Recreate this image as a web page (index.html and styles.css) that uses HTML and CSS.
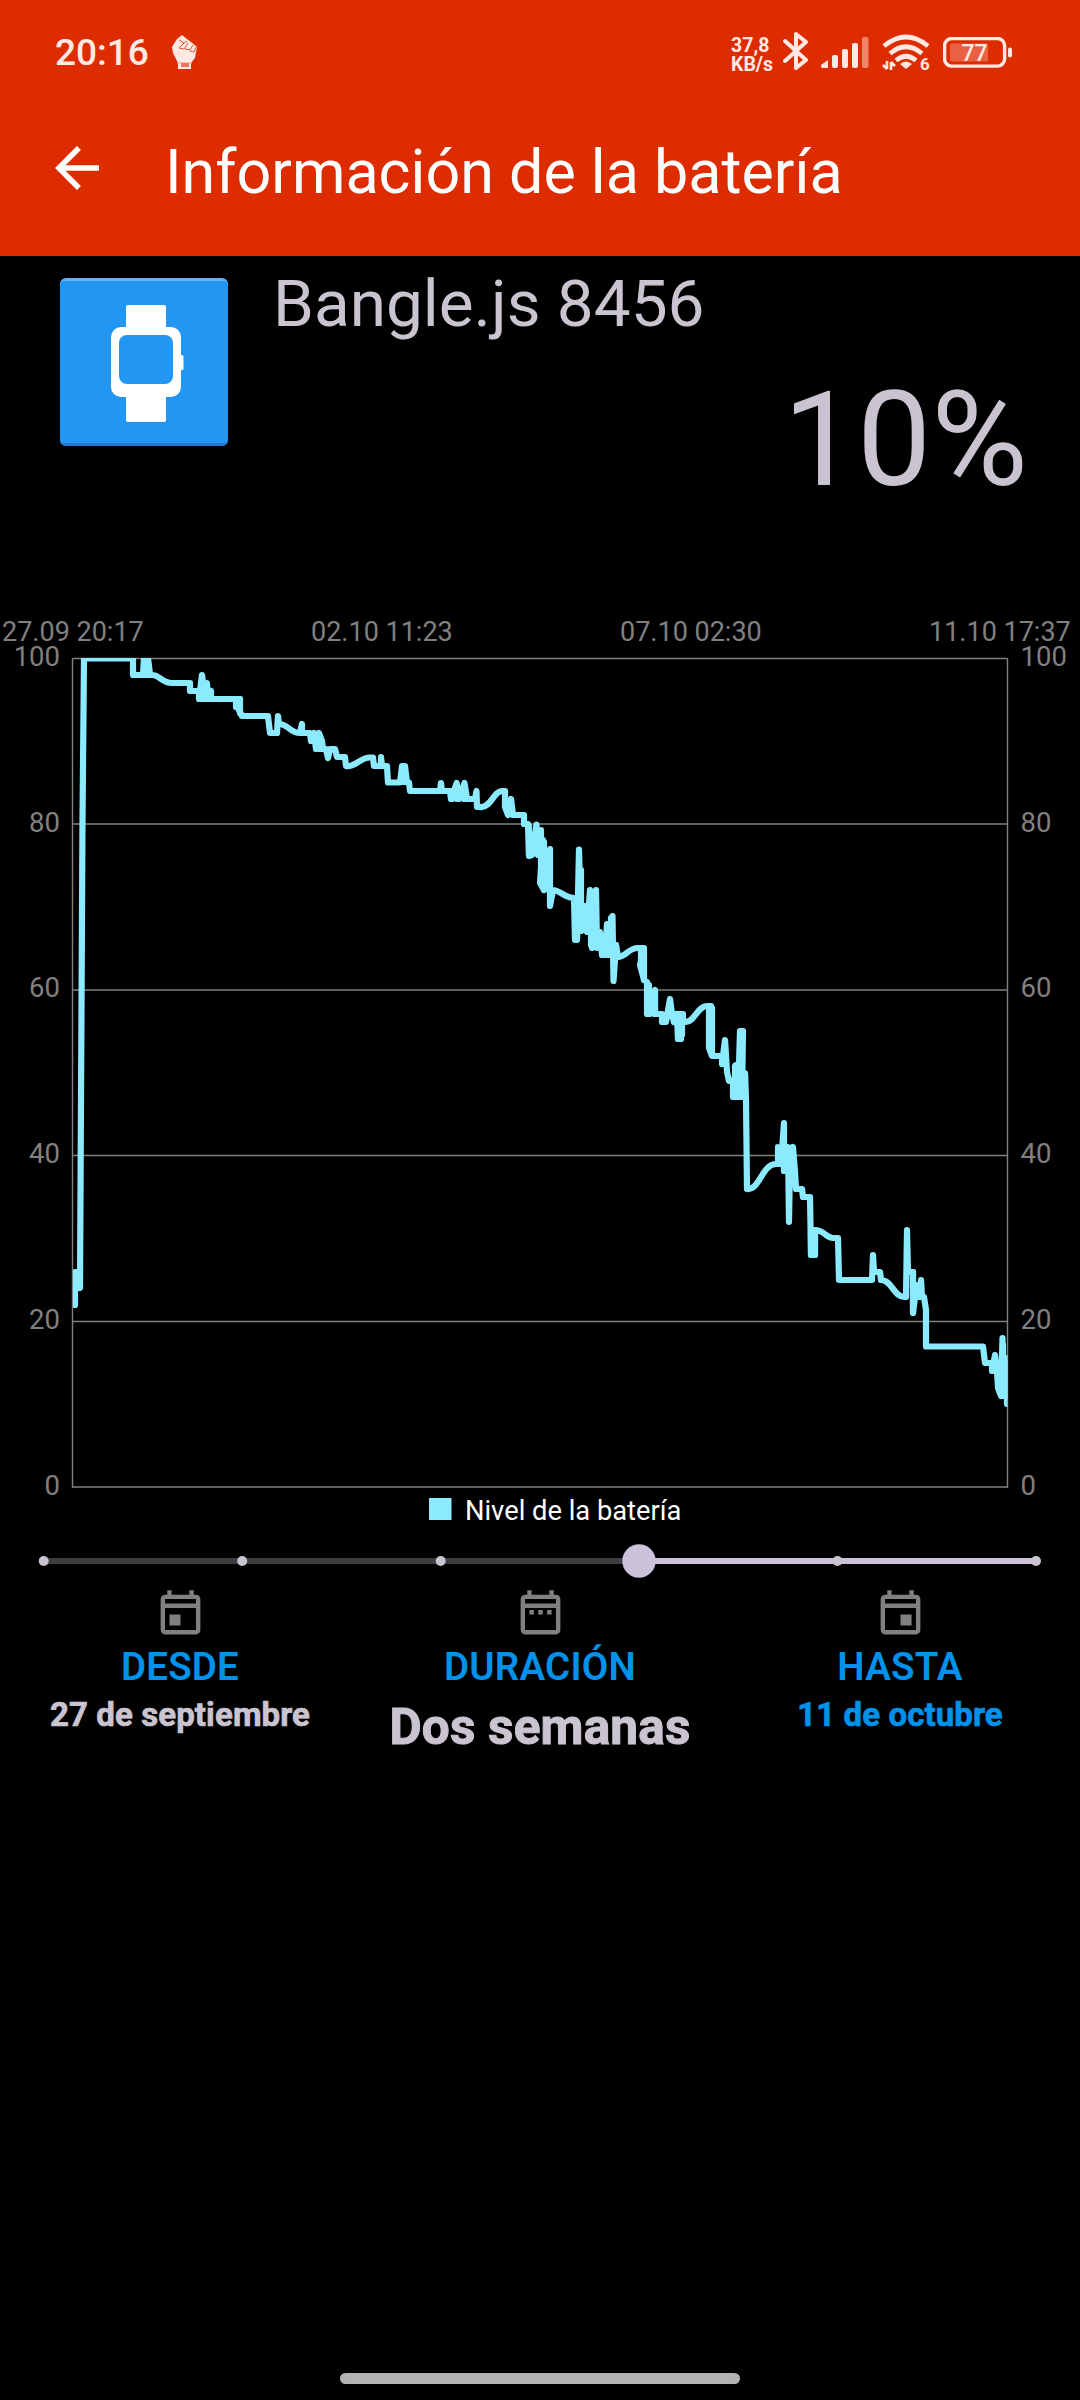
FILE: index.html
```html
<!DOCTYPE html>
<html lang="es">
<head>
    <meta charset="UTF-8">
    <meta name="viewport" content="width=device-width, initial-scale=1.0">
    <title>Información de la batería</title>
    <link rel="stylesheet" href="styles.css">
</head>
<body>
    <header class="header">
        <div class="status-bar">
            <span class="clock">20:16</span>
            <svg class="fist" width="26" height="36" viewBox="0 0 26 36">
                <path d="M10 0L15 4L19 7L25 12L24 17L23 23L19 28V34H6V28L1 18L0 12L5 4Z" fill="#ffe9e2"/>
                <path d="M7 5L12 8L15 6M12 8L7 13L12 14L16 8M13 14L18 15L21 10M18 16L22 17L24 12" fill="none" stroke="#e2553a" stroke-width="1"/>
                <path d="M5 28H20" stroke="#f3a58f" stroke-width="1"/>
                <rect x="9" y="28" width="8" height="4" fill="#ee7460"/>
            </svg>
            <div class="status-right">
                <div class="speed"><span>37,8</span><span>KB/s</span></div>
                <svg class="bluetooth" width="26" height="40" viewBox="0 0 26 40">
                    <path d="M2 10L23 29L13 37V3L23 11L2 30" fill="none" stroke="#ffe9e2" stroke-width="4" stroke-linejoin="round" stroke-linecap="round"/>
                </svg>
                <svg class="signal" width="48" height="32" viewBox="0 0 48 32" fill="#ffe9e2">
                    <path d="M0 28L7 23V31H2Q0 31 0 29Z"/>
                    <rect x="11" y="18" width="6" height="13" rx="2"/>
                    <rect x="21" y="12" width="6" height="19" rx="2"/>
                    <rect x="31" y="6" width="6" height="25" rx="2"/>
                    <rect x="41" y="0" width="6.5" height="31" rx="2" fill="#f08369"/>
                </svg>
                <svg class="wifi" width="48" height="38" viewBox="0 0 48 38">
                    <g fill="none" stroke="#ffe9e2" stroke-width="4.6">
                        <path d="M2 12Q24 -6 46 12"/>
                        <path d="M8 19.5Q24 6 40 19.5"/>
                        <path d="M14 26.5Q24 18 34 26.5"/>
                    </g>
                    <path d="M18 30Q24 25 30 30L24 35Z" fill="#ffe9e2"/>
                    <path d="M5 27V35M1 31L5 35M9 36V28M9 28L13 32" fill="none" stroke="#ffe9e2" stroke-width="2.6"/>
                    <text class="wifi-num" x="38" y="35.5">6</text>
                </svg>
                <svg class="battery" width="70" height="32" viewBox="0 0 70 32">
                    <rect x="1.6" y="1.6" width="60" height="27.5" rx="7" fill="none" stroke="#ffe9e2" stroke-width="3.4"/>
                    <rect x="7" y="6.5" width="38" height="18" rx="2" fill="#e96143"/>
                    <rect x="65" y="10.5" width="4" height="10" rx="2" fill="#ffe9e2"/>
                    <text class="battery-num" x="31.5" y="24" text-anchor="middle">77</text>
                </svg>
            </div>
        </div>
        <div class="app-bar">
            <svg width="66" height="66" viewBox="0 0 24 24">
                <path d="M20 11H7.83l5.59-5.59L12 4l-8 8 8 8 1.41-1.41L7.83 13H20z" fill="#fff"/>
            </svg>
            <h1>Información de la batería</h1>
        </div>
    </header>

    <main>
        <section class="device">
            <svg class="device-icon" width="168" height="168" viewBox="0 0 168 168">
                <rect width="168" height="168" rx="6" fill="#64b2f3"/>
                <rect y="3" width="168" height="165" rx="6" fill="#2379cf"/>
                <rect y="3" width="168" height="162" rx="4" fill="#2196f3"/>
                <g fill="#fff">
                    <rect x="66" y="27" width="40" height="30" rx="2"/>
                    <rect x="66" y="110" width="40" height="34" rx="2"/>
                    <rect x="51" y="49" width="70" height="70" rx="10"/>
                    <rect x="119" y="77" width="4.5" height="15" rx="1.5"/>
                </g>
                <rect x="59" y="57" width="54" height="49" rx="8" fill="#2196f3"/>
            </svg>
            <div class="device-info">
                <div class="device-name">Bangle.js 8456</div>
                <div class="device-level">10%</div>
            </div>
        </section>

        <svg class="chart" width="1080" height="930" viewBox="0 600 1080 930">
            <defs>
                <clipPath id="plot"><rect x="73" y="658" width="934.5" height="829"/></clipPath>
            </defs>
            <g class="axis-label axis-x">
                <text x="2" y="641">27.09 20:17</text>
                <text x="311" y="641">02.10 11:23</text>
                <text x="620" y="641">07.10 02:30</text>
                <text x="929" y="641">11.10 17:37</text>
            </g>
            <g class="axis-label" text-anchor="end">
                <text x="60" y="666">100</text>
                <text x="60" y="831.5">80</text>
                <text x="60" y="997">60</text>
                <text x="60" y="1163">40</text>
                <text x="60" y="1329">20</text>
                <text x="60" y="1494.5">0</text>
            </g>
            <g class="axis-label">
                <text x="1020.5" y="666">100</text>
                <text x="1020.5" y="831.5">80</text>
                <text x="1020.5" y="997">60</text>
                <text x="1020.5" y="1163">40</text>
                <text x="1020.5" y="1329">20</text>
                <text x="1020.5" y="1494.5">0</text>
            </g>
            <path class="grid" d="M73 658.5H1007M73 824H1007M73 990H1007M73 1155.5H1007M73 1321.5H1007M73 1487H1007M72.5 658V1488M1007.5 658V1488"/>
            <g class="line" clip-path="url(#plot)">
                <path d="M75 1305V1272H77L80 1288L82.5 820L84 658.5H133V675H143L144 658.5H148L149 666L150 675H152C160 675 162 683 172 683H190V691H199V699L202 675L205 699L207 683L208 699L211 691V699H240L238 708L242 716H268L270 733H277L278 716L279 724C288 724 290 733 300 733L302 724V733H310L311 741L314 733L316 749L319 733L322 741L323 749H326L328 758L330 749H335L337 757H345L346 766
                    C354 768 360 757.5 370 757.5H373L374 766H381V757L382 766H387L388 782.5H400L402 766H405L407 782.5H409L410 791H440L441 783L442 791H450L451 799L456.7 783L459 799L464.5 783L467 799H475L476.5 791L477 807H480C490 809 494 791 502 791H505V807L508 815L511 799L513 815H524V824H528L529 856L532 855L536.5 824.5L538 855L543 840L540 883L544 890L550 849V906L553 890
                    C560 890 564 898 574 898L575 940H577L579 849.5L581 930L584 906L587 932L590 890L592 948L596 890L597 948L600 932L602 955L606 940L607 924L608 955L612.5 916L613.5 981L616 945L618 957C626 957 628 948 638 948H644L640 965L644 980L647 982V1014H650L655 990V1014H662V1022H666L670 999L672 1014L674 1022L677 1014L678 1039H681L680 1014H683V1022H686
                    C694 1022 698 1006 707 1006H711L709 1048L712 1056H722V1064L725 1040L727 1072L729 1081H733V1097L736 1065L738 1097L740 1031H743L742 1097L745 1073L746 1100L747 1189C760 1190 762 1164 776 1164H778V1147L781 1164L784 1123V1171L788 1147L789 1222L790 1160L793 1147L795 1172L796 1189H802L803 1197H810L811 1255H815V1230
                    C824 1230 826 1238 833 1238H838L839 1280H872L873 1255L874 1272H880L881 1280C892 1280 894 1297 904 1297H906L907 1230L908 1272H913V1313L915 1297H920L921 1280L922 1297H924L926 1310V1346.5H983L985 1363H992V1371L995 1355L997 1371L998 1388L1001 1396L1002.5 1338L1003 1396L1006 1363L1007 1404"/>
                <!-- oscilaciones cortas -->
                <path d="M144 662V675M148 662V675M202 685V699M206 685V699M210 691V699M236 699V707M240 699V713M314 738V741M319 738V749M322 745V749M404 768V782M452 791V799M457 787V799M464 787V799M529 826V855M541 830V883M544 842V890M537 830V845M577 900V938M581 870V931M585 906V930M588 910V930M591 892V945M595 892V947M598 932V947M604 940V955M608 926V955M611 918V955M616 945V957"/>
                <path d="M641 948V960M644 950V980M649 985V1014M655 992V1014M678 1014V1039M682 1014V1035M674 1014V1022M709 1008V1046M712 1008V1055M725 1043V1064M735 1066V1097M738 1066V1097M742 1070V1097M745 1074V1097M779 1148V1164M784 1148V1171M787 1148V1170M791 1150V1165M811 1232V1255M815 1232V1255M913 1272V1310M918 1285V1297M1000 1365V1388M1003 1345V1396M1006 1358V1396"/>
            </g>
            <rect x="429" y="1498" width="22.5" height="22" fill="#8ceafe"/>
            <text class="legend" x="465" y="1520">Nivel de la batería</text>
        </svg>

        <svg class="slider" width="1080" height="58" viewBox="0 1530 1080 58">
            <path d="M43.7 1561H639" stroke="#3f3c42" stroke-width="6"/>
            <path d="M639 1561H1036" stroke="#ccc2dc" stroke-width="6"/>
            <g fill="#cac4d0">
                <circle cx="43.7" cy="1561" r="5"/>
                <circle cx="242.2" cy="1561" r="5"/>
                <circle cx="440.7" cy="1561" r="5"/>
                <circle cx="837.5" cy="1561" r="5"/>
                <circle cx="1036" cy="1561" r="5"/>
            </g>
            <circle cx="639" cy="1561" r="16.7" fill="#ccc2dc"/>
        </svg>

        <section class="range">
            <div class="range-item">
                <svg class="calendar" width="53" height="53" viewBox="0 0 24 24">
                    <path fill-rule="evenodd" d="M6 1h2v2h8V1h2v2h1a2 2 0 0 1 2 2v14a2 2 0 0 1-2 2H5a2 2 0 0 1-2-2V5a2 2 0 0 1 2-2h1zM5 5v2h14V5zM5 9v10h14V9zM7 12h5v5H7z"/>
                </svg>
                <div class="range-label">DESDE</div>
                <div class="range-date">27 de septiembre</div>
            </div>
            <div class="range-item">
                <svg class="calendar" width="53" height="53" viewBox="0 0 24 24">
                    <path fill-rule="evenodd" d="M6 1h2v2h8V1h2v2h1a2 2 0 0 1 2 2v14a2 2 0 0 1-2 2H5a2 2 0 0 1-2-2V5a2 2 0 0 1 2-2h1zM5 5v2h14V5zM5 9v10h14V9zM7 10h2v2H7zM11 10h2v2h-2zM15 10h2v2h-2z"/>
                </svg>
                <div class="range-label">DURACIÓN</div>
                <div class="range-span">Dos semanas</div>
            </div>
            <div class="range-item">
                <svg class="calendar" width="53" height="53" viewBox="0 0 24 24">
                    <path fill-rule="evenodd" d="M6 1h2v2h8V1h2v2h1a2 2 0 0 1 2 2v14a2 2 0 0 1-2 2H5a2 2 0 0 1-2-2V5a2 2 0 0 1 2-2h1zM5 5v2h14V5zM5 9v10h14V9zM12 12h5v5h-5z"/>
                </svg>
                <div class="range-label">HASTA</div>
                <div class="range-date link">11 de octubre</div>
            </div>
        </section>
    </main>

    <footer class="nav-bar"><div class="nav-pill"></div></footer>
</body>
</html>
```

FILE: styles.css
```css
* { box-sizing: border-box; }
body { margin: 0; width: 1080px; height: 2400px; display: flex; flex-direction: column; background: #000; color: #cac4d0; font-family: Roboto, sans-serif; overflow: hidden; }
svg { display: block; flex-shrink: 0; }

/* Cabecera */
.header { height: 256px; background: #dd2c00; color: #fff; }
.status-bar { display: flex; height: 106px; padding: 0 67px 0 55px; color: #ffe9e2; }
.clock { font-size: 37px; font-weight: 500; line-height: 106px; width: 117px; }
.fist { margin-top: 35px; }
.status-right { display: flex; margin-left: auto; align-items: flex-start; }
.speed { display: flex; flex-direction: column; width: 52px; padding-top: 36px; font-size: 19.5px; font-weight: 700; line-height: 19px; }
.bluetooth { margin-top: 31px; }
.signal { margin: 37px 0 0 12px; }
.wifi { margin: 34px 0 0 13px; }
.battery { margin: 37px 0 0 13px; }
.wifi-num { font-size: 17px; font-weight: 700; fill: #ffe9e2; }
.battery-num { font-size: 23px; font-weight: 500; fill: #ffe9e2; }
.app-bar { display: flex; padding: 29px 0 0 44px; }
.app-bar h1 { margin: -28px 0 0 55px; font-size: 61px; font-weight: 400; line-height: 130px; }

/* Dispositivo */
.device { display: flex; height: 344px; padding: 8px 52px 0 60px; }
.device-icon { margin: 14px 45px 0 0; }
.device-info { flex: 1; }
.device-name { padding-top: 1px; font-size: 65.7px; line-height: 78px; }
.device-level { padding-top: 20px; font-size: 132px; line-height: 154px; text-align: right; }

/* Gráfico */
.axis-label { font-size: 27.5px; fill: #808080; }
.axis-x { font-size: 27px; }
.grid { fill: none; stroke: #808080; stroke-width: 1.4; }
.line { fill: none; stroke: #8ceafe; stroke-width: 6.2; stroke-linejoin: round; stroke-linecap: round; }
.legend { font-size: 27.3px; fill: #fff; }

/* Intervalo */
.range { display: grid; grid-template-columns: repeat(3, 1fr); }
.range-item { display: flex; flex-direction: column; align-items: center; font-weight: 700; }
.calendar { fill: #808080; }
.range-label { margin-top: 3px; font-size: 38.5px; font-weight: 600; line-height: 46px; letter-spacing: 0.2px; color: #0091ea; }
.range-date { margin-top: 1px; font-size: 33px; line-height: 48px; letter-spacing: 0.1px; -webkit-text-stroke: 0.7px; }
.range-span { margin-top: 1px; font-size: 49.5px; line-height: 72px; letter-spacing: 0.2px; -webkit-text-stroke: 1px; }
.link { color: #0091ea; }

.nav-bar { display: flex; justify-content: center; margin-top: auto; padding-bottom: 16px; }
.nav-pill { width: 400px; height: 11px; border-radius: 5.5px; background: #b3b3b3; }
```
